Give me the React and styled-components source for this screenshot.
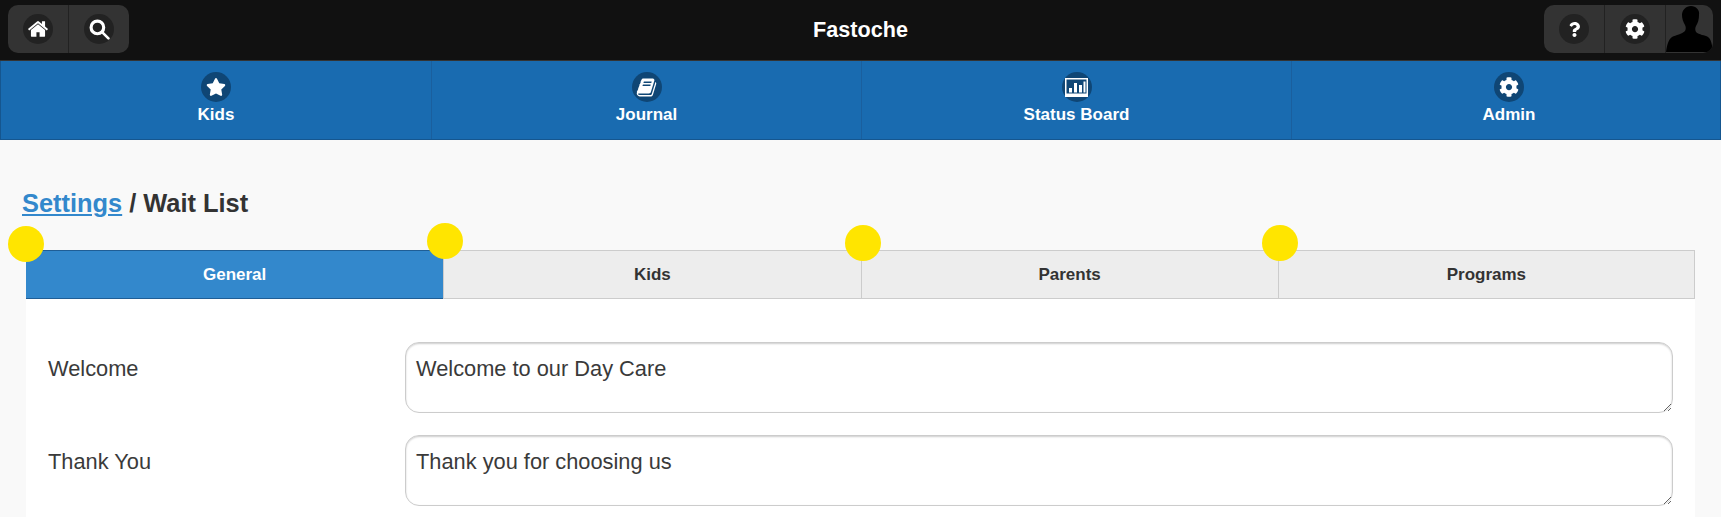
import styled, { createGlobalStyle } from "styled-components";
import { FaStar, FaQuestion, FaCog } from "react-icons/fa";

const GlobalStyle = createGlobalStyle`
  html, body {
    margin: 0;
    height: 100%;
    overflow: hidden;
    background: #f9f9f9;
    font-family: "Liberation Sans", Arial, sans-serif;
    color: #333;
  }
`;

const tabs = ["General", "Kids", "Parents", "Programs"];
const dots = [
  { left: -18, top: -24 },
  { left: 401, top: -27 },
  { left: 819, top: -25 },
  { left: 1236, top: -25 },
];

function HomeIcon() {
  return (
    <svg width="22" height="22" viewBox="0 0 1792 1792" fill="#fff">
      <path d="M1472 992v480q0 26-19 45t-45 19h-384v-384h-256v384h-384q-26 0-45-19t-19-45v-480q0-1 .5-3t.5-3l575-474 575 474q1 2 1 6zm223-69l-62 74q-8 9-21 11h-3q-13 0-21-7l-692-577-692 577q-12 8-24 7-13-2-21-11l-62-74q-8-10-7-23.5t11-21.5l719-599q32-26 76-26t76 26l244 204v-195q0-14 9-23t23-9h192q14 0 23 9t9 23v408l219 182q10 8 11 21.5t-7 23.5z" />
    </svg>
  );
}

function SearchIcon() {
  return (
    <svg width="21" height="21" viewBox="0 0 20 20" fill="none" stroke="#fff">
      <circle cx="8" cy="8" r="6" strokeWidth="3" />
      <path d="M12.500 12.500L18.500 18.500" strokeWidth="2.500" strokeLinecap="round" />
    </svg>
  );
}

function BookIcon() {
  return (
    <svg width="21" height="21" viewBox="0 0 1792 1792" fill="#fff">
      <path d="M1703 478q40 57 18 129l-275 906q-19 64-76.500 107.500t-122.500 43.500h-923q-77 0-148.500-53.500t-99.500-131.500q-24-67-2-127 0-4 3-27t4-37q1-8-3-21.500t-3-19.500q2-11 8-21t16.500-23.500 16.500-23.500q23-38 45-91.500t30-91.500q3-10 .5-30t-.5-28q3-11 17-28t17-23q21-36 42-92t25-90q1-9-2.500-32t.5-28q4-13 22-30.500t22-22.500q19-26 42.500-84.500t27.500-96.500q1-8-3-25.500t-2-26.500q2-8 9-18t18-23 17-21q8-12 16.500-30.500t15-35 16-36 19.500-32 26.500-23.500 36-11.500 47.500 5.500l-1 3q38-9 51-9h761q74 0 114 56t18 130l-274 906q-36 119-71.500 153.500t-128.500 34.500h-869q-27 0-38 15-11 16-1 43 24 70 144 70h923q29 0 56-15.500t35-41.500l300-987q7-22 5-57 38 15 59 43zm-1064 2q-4 13 2 22.500t20 9.500h608q13 0 25.500-9.500t16.500-22.500l21-64q4-13-2-22.500t-20-9.500h-608q-13 0-25.500 9.500t-16.500 22.500zm-83 256q-4 13 2 22.500t20 9.500h608q13 0 25.500-9.500t16.500-22.500l21-64q4-13-2-22.500t-20-9.500h-608q-13 0-25.500 9.500t-16.500 22.500z" />
    </svg>
  );
}

function ChartIcon() {
  return (
    <svg width="23" height="19" viewBox="0 0 23 19" fill="#fff">
      <path d="M0 0h23v19H0zM1.500 1.500v14h20v-14z" fillRule="evenodd" />
      <path d="M4 10h3v4.500H4zM9 5h3v9.500H9zM14 7h3v7.500h-3zM18.500 3.500h2v11h-2z" />
    </svg>
  );
}

function Silhouette() {
  return (
    <svg width="47" height="47" viewBox="0 0 47 47" fill="#000">
      <path d="M0 47c1-8 3-13 6-15 4-2 10-3 13-6 1-2 1-4 0-6-2-3-3-7-3-10 0-5 4-9 9-9s9 4 8 9c0 4-1 8-3 11-1 2-1 4 0 6 3 3 9 3 12 5 3 2 4 7 5 15z" />
    </svg>
  );
}

export default function App() {
  return (
    <Page>
      <GlobalStyle />
      <Header>
        <ButtonGroup>
          <HeadButton><IconCircle><HomeIcon /></IconCircle></HeadButton>
          <HeadButton><IconCircle><SearchIcon /></IconCircle></HeadButton>
        </ButtonGroup>
        <Title>Fastoche</Title>
        <RightGroup>
          <HeadButton><IconCircle $size={15}><FaQuestion /></IconCircle></HeadButton>
          <HeadButton><IconCircle $size={20}><FaCog /></IconCircle></HeadButton>
          <Avatar><Silhouette /></Avatar>
        </RightGroup>
      </Header>
      <Nav>
        <NavItem>
          <NavCircle $size={20}><FaStar /></NavCircle>
          Kids
        </NavItem>
        <NavItem>
          <NavCircle><BookIcon /></NavCircle>
          Journal
        </NavItem>
        <NavItem>
          <NavCircle><ChartIcon /></NavCircle>
          Status Board
        </NavItem>
        <NavItem>
          <NavCircle $size={20}><FaCog /></NavCircle>
          Admin
        </NavItem>
      </Nav>
      <Main>
        <Heading><Crumb href="#">Settings</Crumb> / Wait List</Heading>
        <TabBar>
          {tabs.map((t, i) => (
            <Tab key={t} $active={i === 0}>{t}</Tab>
          ))}
          {dots.map((d) => (
            <Dot key={d.left} $left={d.left} $top={d.top} />
          ))}
        </TabBar>
        <Panel>
          <Field>
            <Label>Welcome</Label>
            <TextArea readOnly defaultValue="Welcome to our Day Care" />
          </Field>
          <Field>
            <Label>Thank You</Label>
            <TextArea readOnly defaultValue="Thank you for choosing us" />
          </Field>
        </Panel>
      </Main>
    </Page>
  );
}

const Page = styled.div`
  height: 517px;
  overflow: hidden;
`;

const Header = styled.header`
  height: 61px;
  box-sizing: border-box;
  padding: 5px 8px 0;
  display: grid;
  grid-template-columns: 1fr auto 1fr;
  align-items: start;
  background: #111;
  border-bottom: 1px solid #333;
`;

const Title = styled.h1`
  margin: 0;
  padding-top: 12px;
  font-size: 21.6px;
  line-height: 25px;
  font-weight: 700;
  color: #fff;
`;

const ButtonGroup = styled.div`
  display: flex;
  justify-self: start;
  height: 48px;
  border-radius: 10px;
  overflow: hidden;
  background: #333;
`;

const RightGroup = styled(ButtonGroup)`
  justify-self: end;
`;

const HeadButton = styled.div`
  width: 60px;
  display: flex;
  align-items: center;
  justify-content: center;
  & + & {
    border-left: 1px solid #222;
  }
`;

const IconCircle = styled.span`
  width: 30px;
  height: 30px;
  border-radius: 50%;
  display: flex;
  align-items: center;
  justify-content: center;
  background: #222;
  color: #fff;
  font-size: ${(p) => p.$size || 18}px;
`;

const Avatar = styled.div`
  width: 47px;
  padding-bottom: 1px;
  border-left: 1px solid #222;
  display: flex;
  align-items: flex-end;
  justify-content: center;
  overflow: hidden;
`;

const Nav = styled.nav`
  display: grid;
  grid-template-columns: 430px 430px 430px 1fr;
  height: 79px;
  box-sizing: border-box;
  background: #196bb0;
  border: 1px solid #15568f;
  border-top: 0;
`;

const NavItem = styled.div`
  padding-top: 11px;
  display: flex;
  flex-direction: column;
  align-items: center;
  gap: 3px;
  font-size: 17px;
  line-height: 20px;
  font-weight: 700;
  color: #fff;
  & + & {
    border-left: 1px solid #1a5f9e;
  }
  &:last-child {
    padding-left: 6px;
  }
`;

const NavCircle = styled(IconCircle)`
  background: #0f4675;
`;

const Main = styled.main`
  padding: 47px 26px 0;
`;

const Heading = styled.h2`
  margin: 0 0 30px -4px;
  font-size: 25.4px;
  line-height: 33px;
  font-weight: 700;
  color: #333;
`;

const Crumb = styled.a`
  color: #3388cc;
`;

const TabBar = styled.div`
  position: relative;
  display: grid;
  grid-template-columns: repeat(4, 1fr);
  height: 49px;
`;

const Tab = styled.div`
  display: flex;
  align-items: center;
  justify-content: center;
  box-sizing: border-box;
  font-size: 17px;
  font-weight: 700;
  color: ${(p) => (p.$active ? "#fff" : "#333")};
  background: ${(p) => (p.$active ? "#3388cc" : "#ededed")};
  border: 1px solid ${(p) => (p.$active ? "#1f5e96" : "#ccc")};
  border-width: 1px 0;
  & + & {
    border-left: 1px solid #ccc;
  }
  &:last-of-type {
    border-right: 1px solid #ccc;
  }
`;

const Dot = styled.span`
  position: absolute;
  left: ${(p) => p.$left}px;
  top: ${(p) => p.$top}px;
  width: 36px;
  height: 36px;
  border-radius: 50%;
  background: #ffe500;
`;

const Panel = styled.section`
  background: #fff;
  padding: 43px 22px 0;
  height: 300px;
  box-sizing: border-box;
`;

const Field = styled.div`
  display: grid;
  grid-template-columns: 357px 1fr;
  margin-bottom: 22px;
`;

const Label = styled.label`
  padding-top: 13px;
  font-size: 21.8px;
  line-height: 28px;
  color: #3a3a3a;
`;

const TextArea = styled.textarea`
  display: block;
  box-sizing: border-box;
  width: 100%;
  height: 71px;
  padding: 12px 10px;
  margin: 0;
  border: 1px solid #ccc;
  border-radius: 14px;
  outline: none;
  background: #fff;
  box-shadow: inset 0 1px 2px rgba(0, 0, 0, 0.2);
  font-family: "Liberation Sans", Arial, sans-serif;
  font-size: 21.8px;
  line-height: 28px;
  color: #3a3a3a;
`;
